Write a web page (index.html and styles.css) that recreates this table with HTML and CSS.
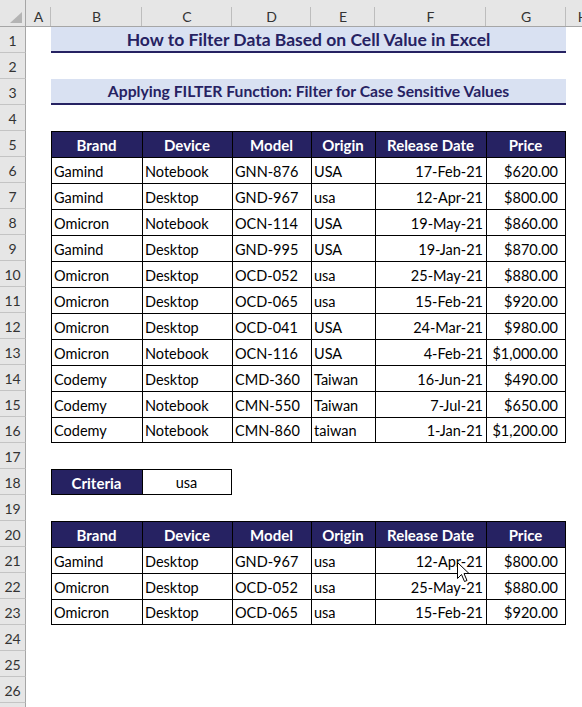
FILE: index.html
```html
<!DOCTYPE html>
<html>
<head>
<meta charset="utf-8">
<link rel="stylesheet" href="styles.css">
</head>
<body>
<div class="sheet">
  <div class="row colhdr">
    <div class="corner"><div class="tri"></div></div>
    <div class="ch">A</div><div class="ch">B</div><div class="ch">C</div><div class="ch">D</div><div class="ch">E</div><div class="ch">F</div><div class="ch">G</div><div class="ch">H</div>
  </div>
  <div class="row"><div class="rh">1</div><div class="c"></div><div class="title t1">How to Filter Data Based on Cell Value in Excel</div></div>
  <div class="row"><div class="rh">2</div></div>
  <div class="row"><div class="rh">3</div><div class="c"></div><div class="title t3">Applying FILTER Function: Filter for Case Sensitive Values</div></div>
  <div class="row"><div class="rh">4</div></div>
  <div class="row tbl hdr"><div class="rh">5</div><div class="c"></div><div class="tc">Brand</div><div class="tc">Device</div><div class="tc">Model</div><div class="tc">Origin</div><div class="tc">Release Date</div><div class="tc">Price</div></div>
  <div class="row tbl"><div class="rh">6</div><div class="c"></div><div class="tc">Gamind</div><div class="tc">Notebook</div><div class="tc">GNN-876</div><div class="tc">USA</div><div class="tc r">17-Feb-21</div><div class="tc p">$620.00</div></div>
  <div class="row tbl"><div class="rh">7</div><div class="c"></div><div class="tc">Gamind</div><div class="tc">Desktop</div><div class="tc">GND-967</div><div class="tc">usa</div><div class="tc r">12-Apr-21</div><div class="tc p">$800.00</div></div>
  <div class="row tbl"><div class="rh">8</div><div class="c"></div><div class="tc">Omicron</div><div class="tc">Notebook</div><div class="tc">OCN-114</div><div class="tc">USA</div><div class="tc r">19-May-21</div><div class="tc p">$860.00</div></div>
  <div class="row tbl"><div class="rh">9</div><div class="c"></div><div class="tc">Gamind</div><div class="tc">Desktop</div><div class="tc">GND-995</div><div class="tc">USA</div><div class="tc r">19-Jan-21</div><div class="tc p">$870.00</div></div>
  <div class="row tbl"><div class="rh">10</div><div class="c"></div><div class="tc">Omicron</div><div class="tc">Desktop</div><div class="tc">OCD-052</div><div class="tc">usa</div><div class="tc r">25-May-21</div><div class="tc p">$880.00</div></div>
  <div class="row tbl"><div class="rh">11</div><div class="c"></div><div class="tc">Omicron</div><div class="tc">Desktop</div><div class="tc">OCD-065</div><div class="tc">usa</div><div class="tc r">15-Feb-21</div><div class="tc p">$920.00</div></div>
  <div class="row tbl"><div class="rh">12</div><div class="c"></div><div class="tc">Omicron</div><div class="tc">Desktop</div><div class="tc">OCD-041</div><div class="tc">USA</div><div class="tc r">24-Mar-21</div><div class="tc p">$980.00</div></div>
  <div class="row tbl"><div class="rh">13</div><div class="c"></div><div class="tc">Omicron</div><div class="tc">Notebook</div><div class="tc">OCN-116</div><div class="tc">USA</div><div class="tc r">4-Feb-21</div><div class="tc p">$1,000.00</div></div>
  <div class="row tbl"><div class="rh">14</div><div class="c"></div><div class="tc">Codemy</div><div class="tc">Desktop</div><div class="tc">CMD-360</div><div class="tc">Taiwan</div><div class="tc r">16-Jun-21</div><div class="tc p">$490.00</div></div>
  <div class="row tbl"><div class="rh">15</div><div class="c"></div><div class="tc">Codemy</div><div class="tc">Notebook</div><div class="tc">CMN-550</div><div class="tc">Taiwan</div><div class="tc r">7-Jul-21</div><div class="tc p">$650.00</div></div>
  <div class="row tbl last"><div class="rh">16</div><div class="c"></div><div class="tc">Codemy</div><div class="tc">Notebook</div><div class="tc">CMN-860</div><div class="tc">taiwan</div><div class="tc r">1-Jan-21</div><div class="tc p">$1,200.00</div></div>
  <div class="row"><div class="rh">17</div></div>
  <div class="row crit"><div class="rh">18</div><div class="c"></div><div class="tc hd">Criteria</div><div class="tc val">usa</div></div>
  <div class="row"><div class="rh">19</div></div>
  <div class="row tbl hdr"><div class="rh">20</div><div class="c"></div><div class="tc">Brand</div><div class="tc">Device</div><div class="tc">Model</div><div class="tc">Origin</div><div class="tc">Release Date</div><div class="tc">Price</div></div>
  <div class="row tbl"><div class="rh">21</div><div class="c"></div><div class="tc">Gamind</div><div class="tc">Desktop</div><div class="tc">GND-967</div><div class="tc">usa</div><div class="tc r">12-Apr-21</div><div class="tc p">$800.00</div></div>
  <div class="row tbl"><div class="rh">22</div><div class="c"></div><div class="tc">Omicron</div><div class="tc">Desktop</div><div class="tc">OCD-052</div><div class="tc">usa</div><div class="tc r">25-May-21</div><div class="tc p">$880.00</div></div>
  <div class="row tbl last"><div class="rh">23</div><div class="c"></div><div class="tc">Omicron</div><div class="tc">Desktop</div><div class="tc">OCD-065</div><div class="tc">usa</div><div class="tc r">15-Feb-21</div><div class="tc p">$920.00</div></div>
  <div class="row"><div class="rh">24</div></div>
  <div class="row"><div class="rh">25</div></div>
  <div class="row"><div class="rh">26</div></div>
  <div class="row"><div class="rh"></div></div>
</div>
<svg class="cursor" width="13" height="21" viewBox="0 0 13 21"><path d="M0.5 0.5 L0.5 16.5 L4.5 12.5 L7.5 19.5 L10 18.5 L7 11.5 L12 11.5 Z" fill="#fff" stroke="#000" stroke-width="1"/></svg>
</body>
</html>
```

FILE: styles.css
```css
html, body {
  margin: 0;
  padding: 0;
  background: #fff;
  overflow: hidden;
}
body {
  font-family: "Lato", "Open Sans", sans-serif;
  font-size: 14.5px;
  color: #000;
  position: relative;
  width: 582px;
  height: 707px;
}
.sheet {
  display: flex;
  flex-direction: column;
}
.row {
  display: grid;
  grid-template-columns: 26px 25px 91px 90px 79px 64px 111px 80px 34px;
  height: 26px;
}
.row > div {
  box-sizing: border-box;
  min-width: 0;
  white-space: nowrap;
  overflow: hidden;
}
.colhdr {
  height: 27px;
  background: #e6e6e6;
  border-bottom: 1px solid #a6a6a6;
  box-sizing: border-box;
}
.corner {
  border-right: 1px solid #a6a6a6;
  display: flex;
  align-items: flex-end;
  justify-content: flex-end;
  padding: 0 3px 3px 0;
}
.tri {
  width: 0;
  height: 0;
  border-left: 12px solid transparent;
  border-bottom: 11px solid #b4b4b4;
}
.ch {
  display: flex;
  align-items: center;
  justify-content: center;
  padding-top: 7px;
  color: #333;
  font-size: 14px;
  background: linear-gradient(#bdbdbd, #bdbdbd) right bottom / 1px 19px no-repeat;
}
.rh {
  grid-column: 1;
  background: #e6e6e6;
  border-right: 1px solid #a6a6a6;
  border-bottom: 1px solid #c4c4c4;
  display: flex;
  align-items: center;
  justify-content: center;
  color: #333;
  font-size: 14px;
  padding-top: 1px;
}
.title {
  grid-column: 3 / 9;
  background: #d9e1f2;
  border-bottom: 2px solid #262262;
  color: #262262;
  font-weight: bold;
  display: flex;
  align-items: center;
  justify-content: center;
}
.t1 { font-size: 17.5px; }
.t3 { font-size: 15.7px; }
.tc {
  border-left: 1px solid #000;
  border-top: 1px solid #000;
  display: flex;
  align-items: center;
  padding: 1px 3px 0 2px;
}
.tbl .tc:last-child {
  border-right: 1px solid #000;
}
.tbl.last .tc {
  border-bottom: 1px solid #000;
}
.tc.r { justify-content: flex-end; }
.tc.p { justify-content: flex-end; padding-right: 7px; }
.hdr .tc {
  background: #262262;
  color: #fff;
  font-weight: bold;
  font-size: 15px;
  justify-content: center;
}
.crit .tc {
  border-bottom: 1px solid #000;
  justify-content: center;
}
.crit .val { border-right: 1px solid #000; }
.crit .hd {
  background: #262262;
  color: #fff;
  font-weight: bold;
  font-size: 15px;
}
.cursor {
  position: absolute;
  left: 457px;
  top: 562px;
}
```
